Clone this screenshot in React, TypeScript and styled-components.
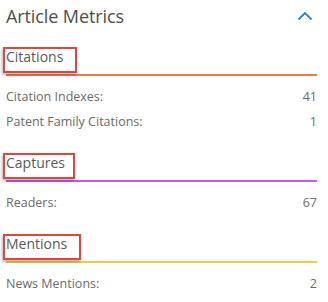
import React from 'react';
import styled, { createGlobalStyle } from 'styled-components';

const GlobalStyle = createGlobalStyle`
    body {
        margin: 0;
        background: #fff;
        font-family: "Open Sans", "Noto Sans", sans-serif;
    }
`

type Metric = { label: string; value: number };
type Group = { title: string; color: string; boxWidth: number; metrics: Metric[] };

const groups: Group[] = [
    {
        title: 'Citations',
        color: '#f4774a',
        boxWidth: 74,
        metrics: [
            { label: 'Citation Indexes:', value: 41 },
            { label: 'Patent Family Citations:', value: 1 },
        ],
    },
    {
        title: 'Captures',
        color: '#c05ce8',
        boxWidth: 72,
        metrics: [{ label: 'Readers:', value: 67 }],
    },
    {
        title: 'Mentions',
        color: '#f1c94a',
        boxWidth: 78,
        metrics: [{ label: 'News Mentions:', value: 2 }],
    },
];

const App: React.FC = () => {
    return (
        <>
            <GlobalStyle />
            <StyledPanel>
                <StyledHeader>
                    <StyledTitle>Article Metrics</StyledTitle>
                    <svg width="16" height="10" viewBox="0 0 16 10">
                        <path d="M1.5 8.5 L8 2 L14.5 8.5" fill="none" stroke="#2f7fc5" strokeWidth="1.8" />
                    </svg>
                </StyledHeader>
                {groups.map((group) => (
                    <StyledGroup key={group.title}>
                        <StyledGroupHead color={group.color}>
                            <StyledGroupTitle>{group.title}</StyledGroupTitle>
                            <StyledHighlight width={group.boxWidth} />
                        </StyledGroupHead>
                        <StyledList>
                            {group.metrics.map((m) => (
                                <StyledRow key={m.label}>
                                    <span>{m.label}</span>
                                    <span>{m.value}</span>
                                </StyledRow>
                            ))}
                        </StyledList>
                    </StyledGroup>
                ))}
            </StyledPanel>
        </>
    )
}

const StyledPanel = styled.div`
    display: flex;
    flex-direction: column;
    width: 328px;
    padding: 0 11px 0 6px;
    box-sizing: border-box;
`

const StyledHeader = styled.div`
    display: flex;
    justify-content: space-between;
    align-items: center;
    height: 32px;
    padding-right: 4px;
`

const StyledTitle = styled.h2`
    margin: 0;
    font-weight: 400;
    font-size: 18px;
    color: #4e4e4e;
    letter-spacing: -0.1px;
`

const StyledGroup = styled.section`
    display: flex;
    flex-direction: column;
`

const StyledGroupHead = styled.div<{ color: string }>`
    position: relative;
    height: 44px;
    display: flex;
    align-items: flex-end;
    border-bottom: 2px solid ${({ color }) => color};
    box-sizing: border-box;
`

const StyledGroupTitle = styled.div`
    font-size: 14px;
    color: #5a5a5a;
    line-height: 20px;
    margin-bottom: 7px;
`

const StyledHighlight = styled.div<{ width: number }>`
    position: absolute;
    left: -3px;
    bottom: 1px;
    width: ${({ width }) => width}px;
    height: 26px;
    border: 2px solid #e2453f;
    box-sizing: border-box;
    box-shadow: -1px 2px 3px rgba(0, 0, 0, 0.28);
`

const StyledList = styled.div`
    display: flex;
    flex-direction: column;
    padding-top: 12px;
    gap: 8px;
    padding-bottom: 8px;
`

const StyledRow = styled.div`
    display: flex;
    justify-content: space-between;
    font-size: 12.5px;
    line-height: 17px;
    color: #6a6a6a;
`

export default App
